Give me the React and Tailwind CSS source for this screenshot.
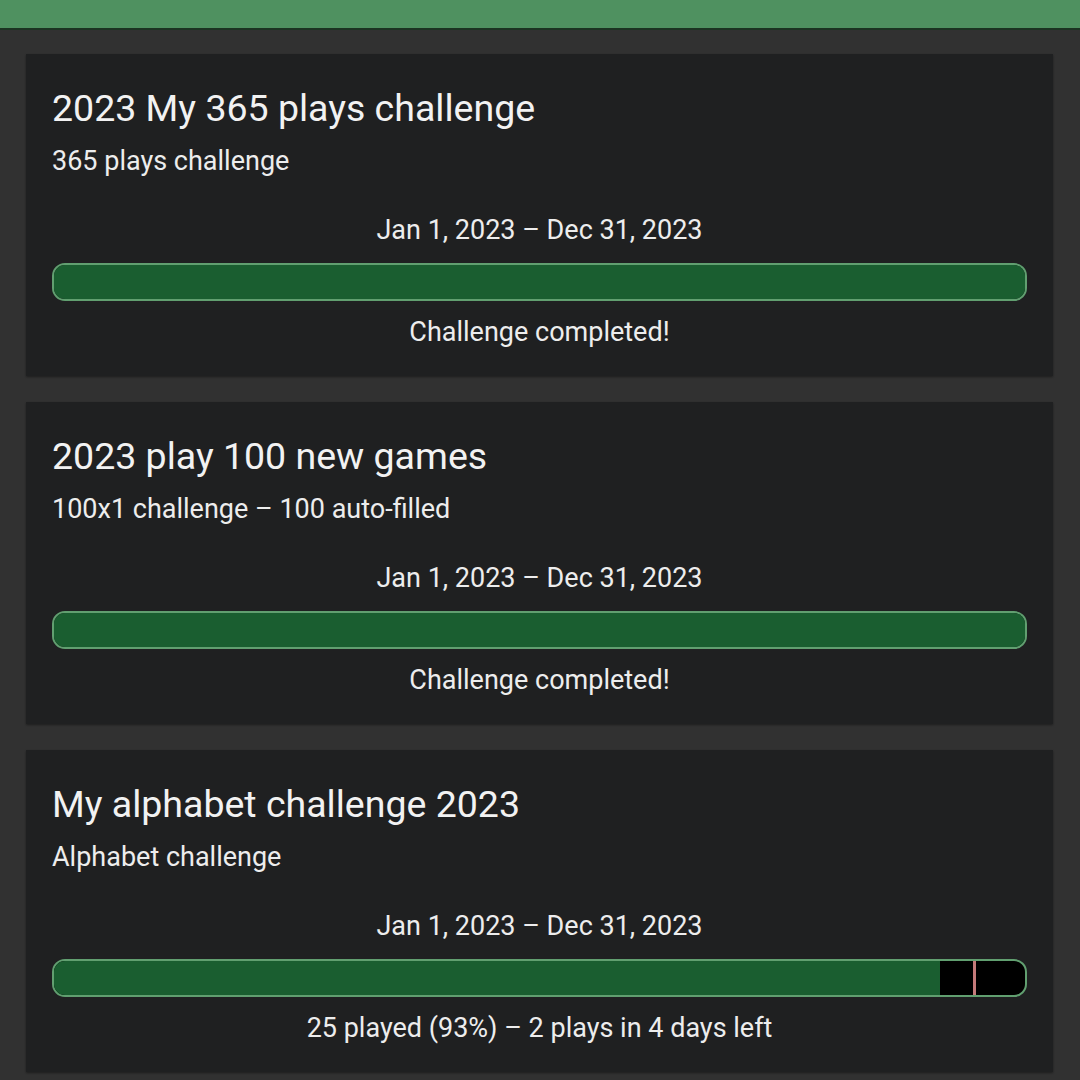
const challenges = [
  {
    title: "2023 My 365 plays challenge",
    subtitle: "365 plays challenge",
    dates: "Jan 1, 2023 – Dec 31, 2023",
    progress: 100,
    status: "Challenge completed!",
  },
  {
    title: "2023 play 100 new games",
    subtitle: "100x1 challenge – 100 auto-filled",
    dates: "Jan 1, 2023 – Dec 31, 2023",
    progress: 100,
    status: "Challenge completed!",
  },
  {
    title: "My alphabet challenge 2023",
    subtitle: "Alphabet challenge",
    dates: "Jan 1, 2023 – Dec 31, 2023",
    progress: 91.2,
    marker: 94.6,
    status: "25 played (93%) – 2 plays in 4 days left",
  },
];

const ProgressBar = ({ progress, marker }) => (
  <div className="relative h-[38px] rounded-[13px] border-2 border-[#619f70] bg-black overflow-hidden">
    <div className="h-full bg-[#1a5e30]" style={{ width: `${progress}%` }} />
    {marker && (
      <div
        className="absolute top-0 bottom-0 w-[3px] bg-[#c47a7a]"
        style={{ left: `${marker}%` }}
      />
    )}
  </div>
);

const ChallengeCard = ({ challenge }) => (
  <div className="bg-[#1f2021] px-[26px] pt-[34px] pb-[28px] shadow-[0_1px_2px_rgba(0,0,0,0.4)]">
    <h2 className="text-[37.5px] leading-[40px] text-[#f2f2f2]">{challenge.title}</h2>
    <p className="mt-[17px] text-[27px] leading-[32px] text-[#ededed]">{challenge.subtitle}</p>
    <p className="mt-[37px] text-center text-[27px] leading-[32px] text-[#ededed]">{challenge.dates}</p>
    <div className="mt-[17px]">
      <ProgressBar progress={challenge.progress} marker={challenge.marker} />
    </div>
    <p className="mt-[15px] text-center text-[27px] leading-[32px] text-[#ededed]">{challenge.status}</p>
  </div>
);

export default function App() {
  return (
    <div
      className="w-[1080px] h-[1080px] overflow-hidden bg-[#313131]"
      style={{ fontFamily: "Roboto, 'Noto Sans', sans-serif" }}
    >
      <div className="h-[28px] bg-[#4f9160] border-b-2 border-[#1c3322] box-content" />
      <div className="flex flex-col gap-[26px] pt-[24px] px-[26px] pr-[27px]">
        {challenges.map((c) => (
          <ChallengeCard key={c.title} challenge={c} />
        ))}
      </div>
    </div>
  );
}
